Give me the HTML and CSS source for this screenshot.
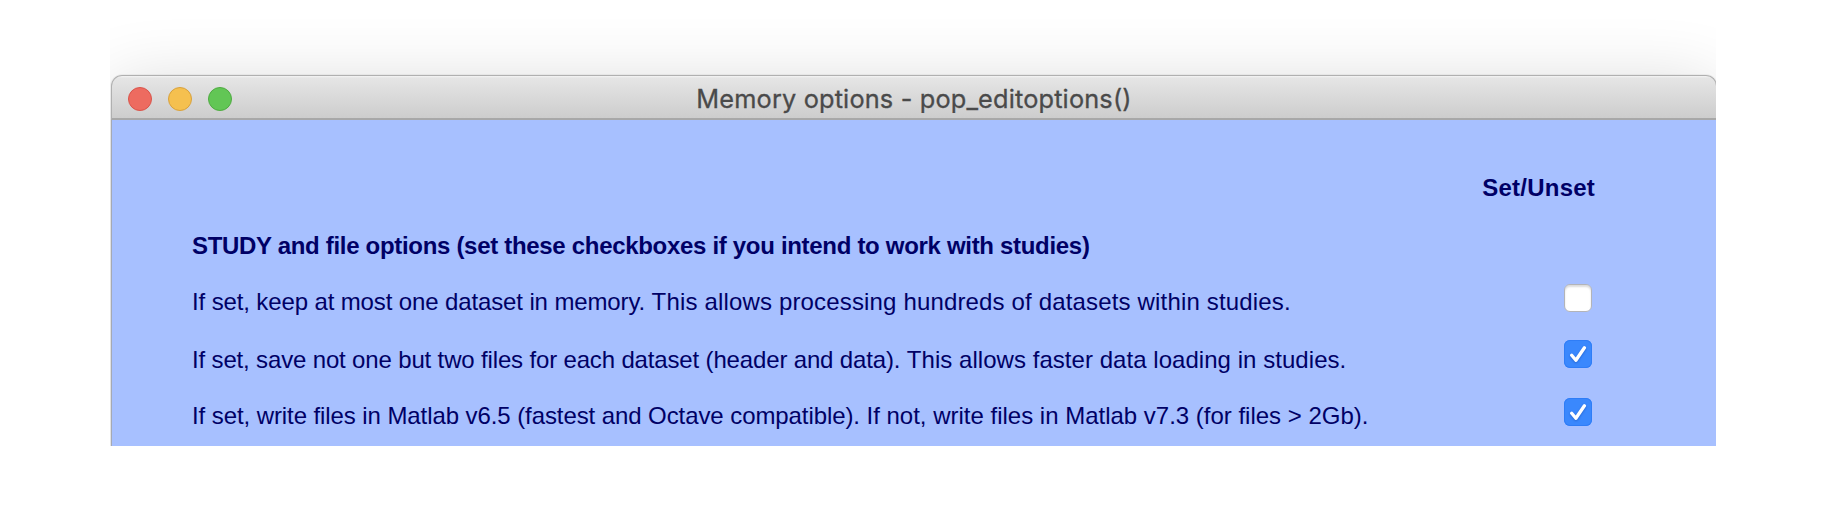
FILE: index.html
```html
<!DOCTYPE html>
<html lang="en">
<head>
<meta charset="utf-8">
<title>Memory options - pop_editoptions()</title>
<link rel="stylesheet" href="styles.css">
</head>
<body>
<main class="stage">
  <section class="window">
    <header class="titlebar">
      <div class="lights">
        <span class="light close"></span>
        <span class="light minimize"></span>
        <span class="light zoom"></span>
      </div>
      <h1 class="title"><span>Memory options - pop_editoptions()</span></h1>
    </header>
    <div class="panel">
      <div class="column-head"><span>Set/Unset</span></div>
      <h2 class="group"><span>STUDY and file options (set these checkboxes if you intend to work with studies)</span></h2>
      <div class="option first">
        <span class="label">If set, keep at most one dataset in memory. <span class="tail">This allows processing hundreds of datasets within studies.</span></span>
        <span class="check"></span>
      </div>
      <div class="option second">
        <span class="label">If set, save not one but two files for each dataset (header and data). <span class="tail">This allows faster data loading in studies.</span></span>
        <span class="check on"><svg viewBox="0 0 28 28" width="28" height="28"><path class="tick" d="M7.7 15.3 L11.9 20.3 L20.4 7.8"/></svg></span>
      </div>
      <div class="option third">
        <span class="label">If set, write files in Matlab v6.5 (fastest and Octave compatible). <span class="tail">If not, write files in Matlab v7.3 (for files &gt; 2Gb).</span></span>
        <span class="check on"><svg viewBox="0 0 28 28" width="28" height="28"><path class="tick" d="M7.7 15.3 L11.9 20.3 L20.4 7.8"/></svg></span>
      </div>
    </div>
  </section>
</main>
</body>
</html>
```
FILE: styles.css
```css
body {
  margin: 0;
  background: #fff;
  font-family: "Liberation Sans", Arial, sans-serif;
}
.stage {
  box-sizing: border-box;
  width: 1606px;
  height: 446px;
  margin-left: 110px;
  padding: 75px 0 0 1px;
  overflow: hidden;
}
.window {
  width: 1606px;
  height: 400px;
  border-radius: 11px 11px 0 0;
  box-shadow: 0 0 0 1px rgba(0, 0, 0, 0.04), 0 10px 70px rgba(0, 0, 0, 0.16);
}
.titlebar {
  box-sizing: border-box;
  display: grid;
  grid-template-columns: 120px 1fr 120px;
  align-items: center;
  height: 45px;
  padding: 0 16px;
  border: 1px solid #b0b0b0;
  border-bottom: 2px solid #a8a8a8;
  border-radius: 11px 11px 0 0;
  background: linear-gradient(#f4f4f4 0, #e5e5e5 2px, #cdcdcd 100%);
}
.lights {
  display: flex;
  gap: 16px;
  margin-top: 3px;
}
.light {
  box-sizing: border-box;
  width: 24px;
  height: 24px;
  border-radius: 50%;
}
.close { background: #ed6b60; border: 1px solid #d9544b; }
.minimize { background: #f5c04f; border: 1px solid #d8a13d; }
.zoom { background: #62c655; border: 1px solid #4fab42; }
.title {
  margin: 3px 0 0;
  color: #4a4a4a;
  font: 400 25.3px/30px Inter, sans-serif;
  letter-spacing: 0.17px;
  -webkit-text-stroke: 0.3px #4a4a4a;
  text-align: center;
  white-space: nowrap;
}
.panel {
  box-sizing: border-box;
  height: 355px;
  padding: 54px 125px 0 80px;
  border-left: 1px solid #a5a9b4;
  background: #a7c0ff;
  color: #000066;
  font-size: 24px;
  line-height: 28px;
  white-space: nowrap;
}
.column-head {
  height: 58px;
  margin-right: -3px;
  text-align: right;
  font-weight: 700;
  letter-spacing: 0.22px;
}
.group {
  height: 52px;
  margin: 0;
  font-size: 24px;
  font-weight: 700;
  letter-spacing: -0.31px;
}
.option {
  display: flex;
  justify-content: space-between;
  align-items: flex-start;
}
.first { height: 56px; letter-spacing: -0.125px; }
.first .tail { letter-spacing: 0.16px; }
.second { height: 58px; letter-spacing: -0.155px; }
.second .tail { letter-spacing: 0.045px; }
.third { height: 48px; letter-spacing: -0.085px; }
.third .tail { letter-spacing: -0.005px; }
.label { padding-top: 4px; }
.second .label { padding-top: 6px; }
.check {
  box-sizing: border-box;
  width: 28px;
  height: 28px;
  border: 1px solid #b3b4b8;
  border-radius: 6px;
  background: #fff;
  box-shadow: inset 0 2px 2px rgba(0, 0, 0, 0.14);
}
.check.on {
  border: 0;
  background: #3a88fd;
  box-shadow: inset 0 0 0 1px #2f7df6;
}
.check svg { display: block; }
.tick {
  fill: none;
  stroke: #fff;
  stroke-width: 3.3;
  stroke-linecap: round;
  stroke-linejoin: round;
  filter: drop-shadow(0 1px 1px rgba(0, 40, 130, 0.35));
}
```
